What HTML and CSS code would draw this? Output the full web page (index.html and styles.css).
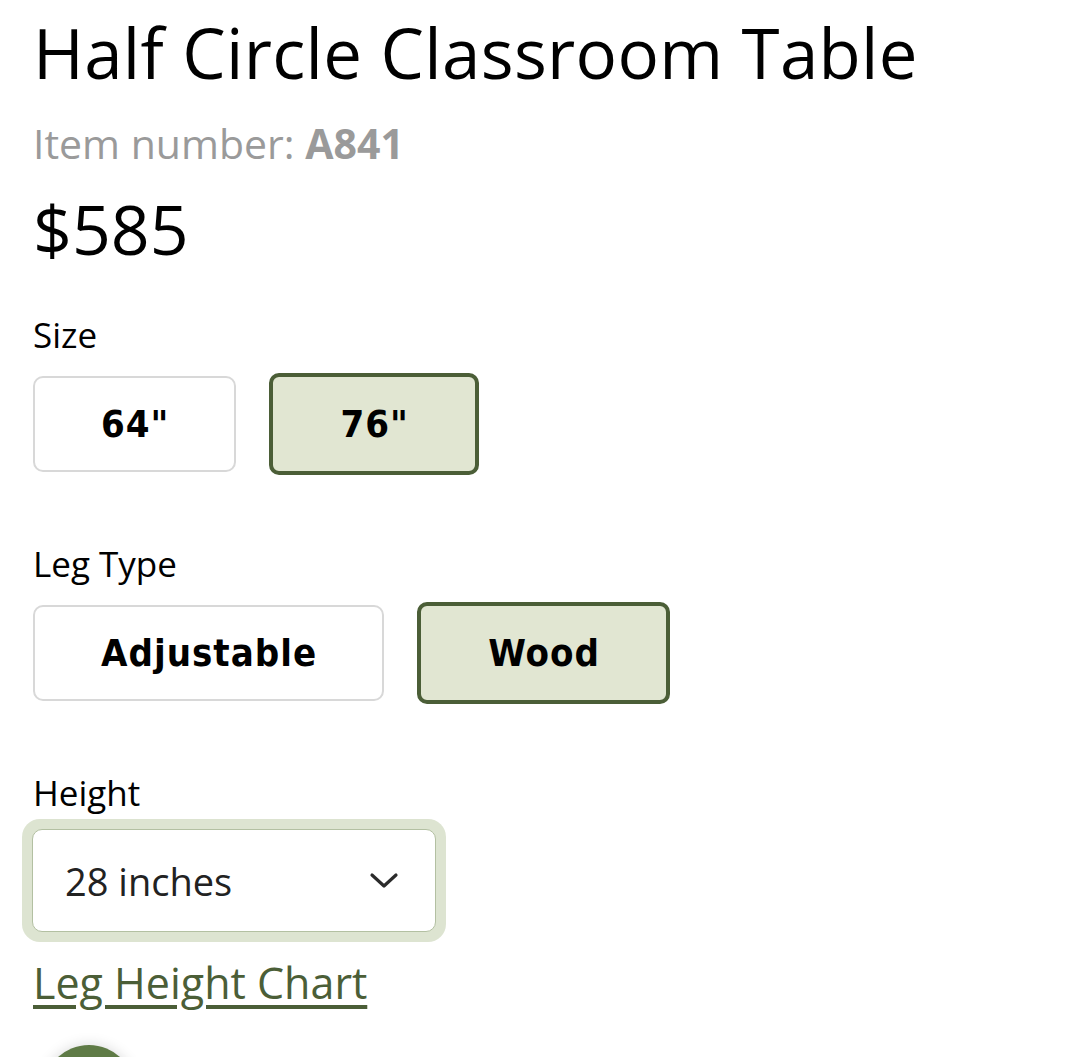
FILE: index.html
```html
<!DOCTYPE html>
<html lang="en">
<head>
    <meta charset="UTF-8">
    <meta name="viewport" content="width=device-width, initial-scale=1.0">
    <title>Half Circle Classroom Table</title>
    <link rel="stylesheet" href="styles.css">
</head>
<body>
    <div class="product">
        <h1 class="title">Half Circle Classroom Table</h1>
        <div class="item-number">Item number: <b>A841</b></div>
        <div class="price">$585</div>

        <div class="option">
            <div class="option-label">Size</div>
            <div class="choices">
                <button class="choice">64"</button>
                <button class="choice selected">76"</button>
            </div>
        </div>

        <div class="option">
            <div class="option-label">Leg Type</div>
            <div class="choices">
                <button class="choice">Adjustable</button>
                <button class="choice selected">Wood</button>
            </div>
        </div>

        <div class="option height-option">
            <div class="option-label">Height</div>
            <div class="select-ring">
                <div class="select-box">
                    <span>28 inches</span>
                    <svg class="chevron" width="30" height="18" viewBox="0 0 30 18">
                        <path d="M3 3 L15 14 L27 3" fill="none" stroke="#2b2b2b" stroke-width="3.2" stroke-linecap="round" stroke-linejoin="round"/>
                    </svg>
                </div>
            </div>
        </div>

        <a class="chart-link" href="#">Leg Height Chart</a>

        <div class="chat-bubble"></div>
    </div>
</body>
</html>
```

FILE: styles.css
```css
body {
    margin: 0;
    background-color: #fff;
    font-family: "Open Sans", "Noto Sans", sans-serif;
    color: #000;
    overflow: hidden;
}

.product {
    padding: 0 0 0 33px;
    height: 1057px;
    position: relative;
}

.title {
    margin: 0;
    padding-top: 6px;
    font-size: 69px;
    font-weight: 400;
    line-height: 92px;
    letter-spacing: 0.3px;
}

.item-number {
    margin-top: 20px;
    font-size: 41px;
    line-height: 50px;
    color: #9a9a9a;
}

.item-number b {
    font-weight: 700;
}

.price {
    margin-top: 16px;
    font-size: 68px;
    line-height: 90px;
}

.option {
    margin-top: 39px;
}

.option + .option {
    margin-top: 67px;
}

.option-label {
    font-size: 35px;
    line-height: 44px;
    margin-bottom: 16px;
}

.choices {
    display: flex;
    align-items: center;
    gap: 30px;
}

.choice {
    margin: 0 3px 0 0;
    height: 96px;
    padding: 0 65px 0 66px;
    background-color: #fff;
    border: 2px solid #d8d8d8;
    border-radius: 10px;
    font-family: "DejaVu Sans", sans-serif;
    font-stretch: condensed;
    font-weight: 700;
    font-size: 38px;
    letter-spacing: 1px;
    color: #000;
}

.choice.selected {
    margin: 0;
    height: 102px;
    padding: 0 66px 0 67px;
    background-color: #e1e6d2;
    border: 4px solid #4b5e37;
}

.height-option .option-label {
    margin-bottom: 4px;
}

.select-ring {
    display: inline-block;
    margin-left: -11px;
    padding: 10px;
    background-color: #dde4d1;
    border-radius: 18px;
}

.select-box {
    box-sizing: border-box;
    display: flex;
    align-items: center;
    justify-content: space-between;
    width: 404px;
    height: 103px;
    padding: 0 36px 0 32px;
    background-color: #fff;
    border: 1px solid #b3c0a2;
    border-radius: 10px;
    font-size: 38px;
    color: #222;
}

.chart-link {
    display: inline-block;
    margin-top: 15px;
    font-size: 43px;
    line-height: 52px;
    color: #4b5e37;
    text-decoration: underline;
    text-decoration-thickness: 4px;
    text-underline-offset: 6px;
}

.chat-bubble {
    position: absolute;
    left: 43px;
    top: 1045px;
    width: 92px;
    height: 92px;
    border-radius: 50%;
    background-color: #5f7b46;
    box-shadow: 0 0 14px rgba(0, 0, 0, 0.15);
}
```
